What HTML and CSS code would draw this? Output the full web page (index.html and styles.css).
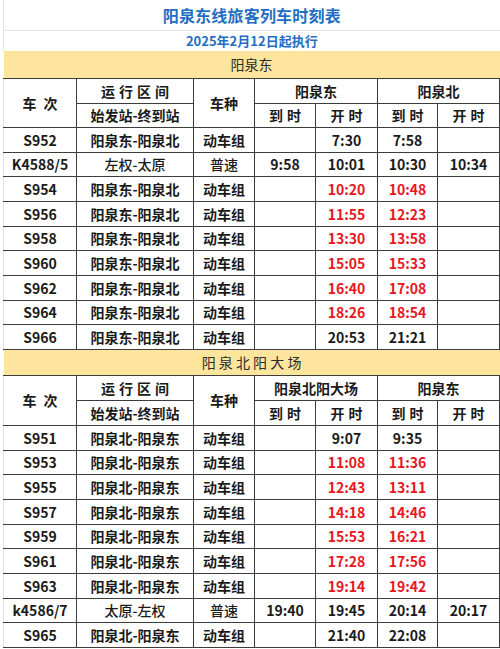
FILE: index.html
```html
<!DOCTYPE html>
<html lang="zh-CN">
<head>
<meta charset="utf-8">
<title>阳泉东线旅客列车时刻表</title>
<link rel="stylesheet" href="styles.css">
</head>
<body>
<table class="tt">
  <colgroup>
    <col class="c1"><col class="c2"><col class="c3"><col class="c4"><col class="c5"><col class="c6"><col class="c7">
  </colgroup>
  <tr class="r-title"><td colspan="7" class="title">阳泉东线旅客列车时刻表</td></tr>
  <tr class="r-date"><td colspan="7" class="date">2025年2月12日起执行</td></tr>
  <tr class="r-band"><td colspan="7" class="band">阳泉东</td></tr>
  <tr class="r-h1">
    <td rowspan="2" class="hd sp2">车次</td>
    <td class="hd sp">运行区间</td>
    <td rowspan="2" class="hd">车种</td>
    <td colspan="2" class="hd">阳泉东</td>
    <td colspan="2" class="hd">阳泉北</td>
  </tr>
  <tr class="r-h2">
    <td class="hd">始发站-终到站</td>
    <td class="hd sp">到时</td><td class="hd sp">开时</td>
    <td class="hd sp">到时</td><td class="hd sp">开时</td>
  </tr>
  <tr class="r-a"><td>S952</td><td>阳泉东-阳泉北</td><td>动车组</td><td></td><td>7:30</td><td>7:58</td><td></td></tr>
  <tr class="r-b"><td>K4588/5</td><td class="nb">左权-太原</td><td class="nb">普速</td><td>9:58</td><td>10:01</td><td>10:30</td><td>10:34</td></tr>
  <tr class="r-a"><td>S954</td><td>阳泉东-阳泉北</td><td>动车组</td><td></td><td class="red">10:20</td><td class="red">10:48</td><td></td></tr>
  <tr class="r-a"><td>S956</td><td>阳泉东-阳泉北</td><td>动车组</td><td></td><td class="red">11:55</td><td class="red">12:23</td><td></td></tr>
  <tr class="r-b"><td>S958</td><td>阳泉东-阳泉北</td><td>动车组</td><td></td><td class="red">13:30</td><td class="red">13:58</td><td></td></tr>
  <tr class="r-a"><td>S960</td><td>阳泉东-阳泉北</td><td>动车组</td><td></td><td class="red">15:05</td><td class="red">15:33</td><td></td></tr>
  <tr class="r-a"><td>S962</td><td>阳泉东-阳泉北</td><td>动车组</td><td></td><td class="red">16:40</td><td class="red">17:08</td><td></td></tr>
  <tr class="r-b"><td>S964</td><td>阳泉东-阳泉北</td><td>动车组</td><td></td><td class="red">18:26</td><td class="red">18:54</td><td></td></tr>
  <tr class="r-a"><td>S966</td><td>阳泉东-阳泉北</td><td>动车组</td><td></td><td>20:53</td><td>21:21</td><td></td></tr>
  <tr class="r-band2"><td colspan="7" class="band">阳 泉 北 阳 大 场</td></tr>
  <tr class="r-h1">
    <td rowspan="2" class="hd sp2">车次</td>
    <td class="hd sp">运行区间</td>
    <td rowspan="2" class="hd">车种</td>
    <td colspan="2" class="hd">阳泉北阳大场</td>
    <td colspan="2" class="hd">阳泉东</td>
  </tr>
  <tr class="r-h2b">
    <td class="hd">始发站-终到站</td>
    <td class="hd sp">到时</td><td class="hd sp">开时</td>
    <td class="hd sp">到时</td><td class="hd sp">开时</td>
  </tr>
  <tr class="r-a"><td>S951</td><td>阳泉北-阳泉东</td><td>动车组</td><td></td><td>9:07</td><td>9:35</td><td></td></tr>
  <tr class="r-b"><td>S953</td><td>阳泉北-阳泉东</td><td>动车组</td><td></td><td class="red">11:08</td><td class="red">11:36</td><td></td></tr>
  <tr class="r-a"><td>S955</td><td>阳泉北-阳泉东</td><td>动车组</td><td></td><td class="red">12:43</td><td class="red">13:11</td><td></td></tr>
  <tr class="r-a"><td>S957</td><td>阳泉北-阳泉东</td><td>动车组</td><td></td><td class="red">14:18</td><td class="red">14:46</td><td></td></tr>
  <tr class="r-b"><td>S959</td><td>阳泉北-阳泉东</td><td>动车组</td><td></td><td class="red">15:53</td><td class="red">16:21</td><td></td></tr>
  <tr class="r-a"><td>S961</td><td>阳泉北-阳泉东</td><td>动车组</td><td></td><td class="red">17:28</td><td class="red">17:56</td><td></td></tr>
  <tr class="r-a"><td>S963</td><td>阳泉北-阳泉东</td><td>动车组</td><td></td><td class="red">19:14</td><td class="red">19:42</td><td></td></tr>
  <tr class="r-b"><td>k4586/7</td><td class="nb">太原-左权</td><td class="nb">普速</td><td>19:40</td><td>19:45</td><td>20:14</td><td>20:17</td></tr>
  <tr class="r-a"><td>S965</td><td>阳泉北-阳泉东</td><td>动车组</td><td></td><td>21:40</td><td>22:08</td><td></td></tr>
</table>
</body>
</html>
```

FILE: styles.css
```css
html, body {
  margin: 0;
  padding: 0;
  background: #ffffff;
}

body {
  font-family: "Noto Sans CJK SC", "Noto Sans", sans-serif;
  color: #1a1a1a;
}

.tt {
  margin-left: 3px;
  width: 496px;
  border-collapse: collapse;
  table-layout: fixed;
}

.c1 { width: 73px; }
.c2 { width: 117px; }
.c3 { width: 61px; }
.c4 { width: 61px; }
.c5 { width: 62px; }
.c6 { width: 60px; }
.c7 { width: 62px; }

.tt td {
  border: 1px solid #3c3c3c;
  padding: 0;
  text-align: center;
  vertical-align: middle;
  font-size: 14px;
  font-weight: 700;
  line-height: 16px;
  white-space: nowrap;
  overflow: hidden;
}

.tt tr td:first-child {
  border-left-color: #e4e4e8;
}

.tt td.title {
  border: 1px solid #e4e4e8;
  border-top: none;
  border-right: none;
  color: #1f6ec2;
  font-size: 16px;
  font-weight: 700;
  letter-spacing: 0.2px;
}

.tt td.date {
  border: none;
  border-left: 1px solid #e4e4e8;
  color: #1f6ec2;
  font-size: 13px;
  font-weight: 700;
}

.tt td.band {
  border: none;
  background: #fde59d;
  color: #2a2a2a;
  font-weight: 400;
  font-size: 14px;
}

.tt td.hd {
  font-weight: 700;
}

.tt td.sp {
  letter-spacing: 4px;
  text-indent: 4px;
}

.tt td.sp2 {
  letter-spacing: 7px;
  text-indent: 7px;
}

.tt td.nb {
  font-weight: 500;
}

.tt td.red {
  color: #e8161e;
}

.r-title { height: 30px; }
.r-date { height: 21px; }
.r-band { height: 27px; }
.r-band2 { height: 26px; }
.r-h1 { height: 25px; }
.r-h2 { height: 24px; }
.r-h2b { height: 25px; }
.r-a { height: 25px; }
.r-b { height: 24px; }
```
